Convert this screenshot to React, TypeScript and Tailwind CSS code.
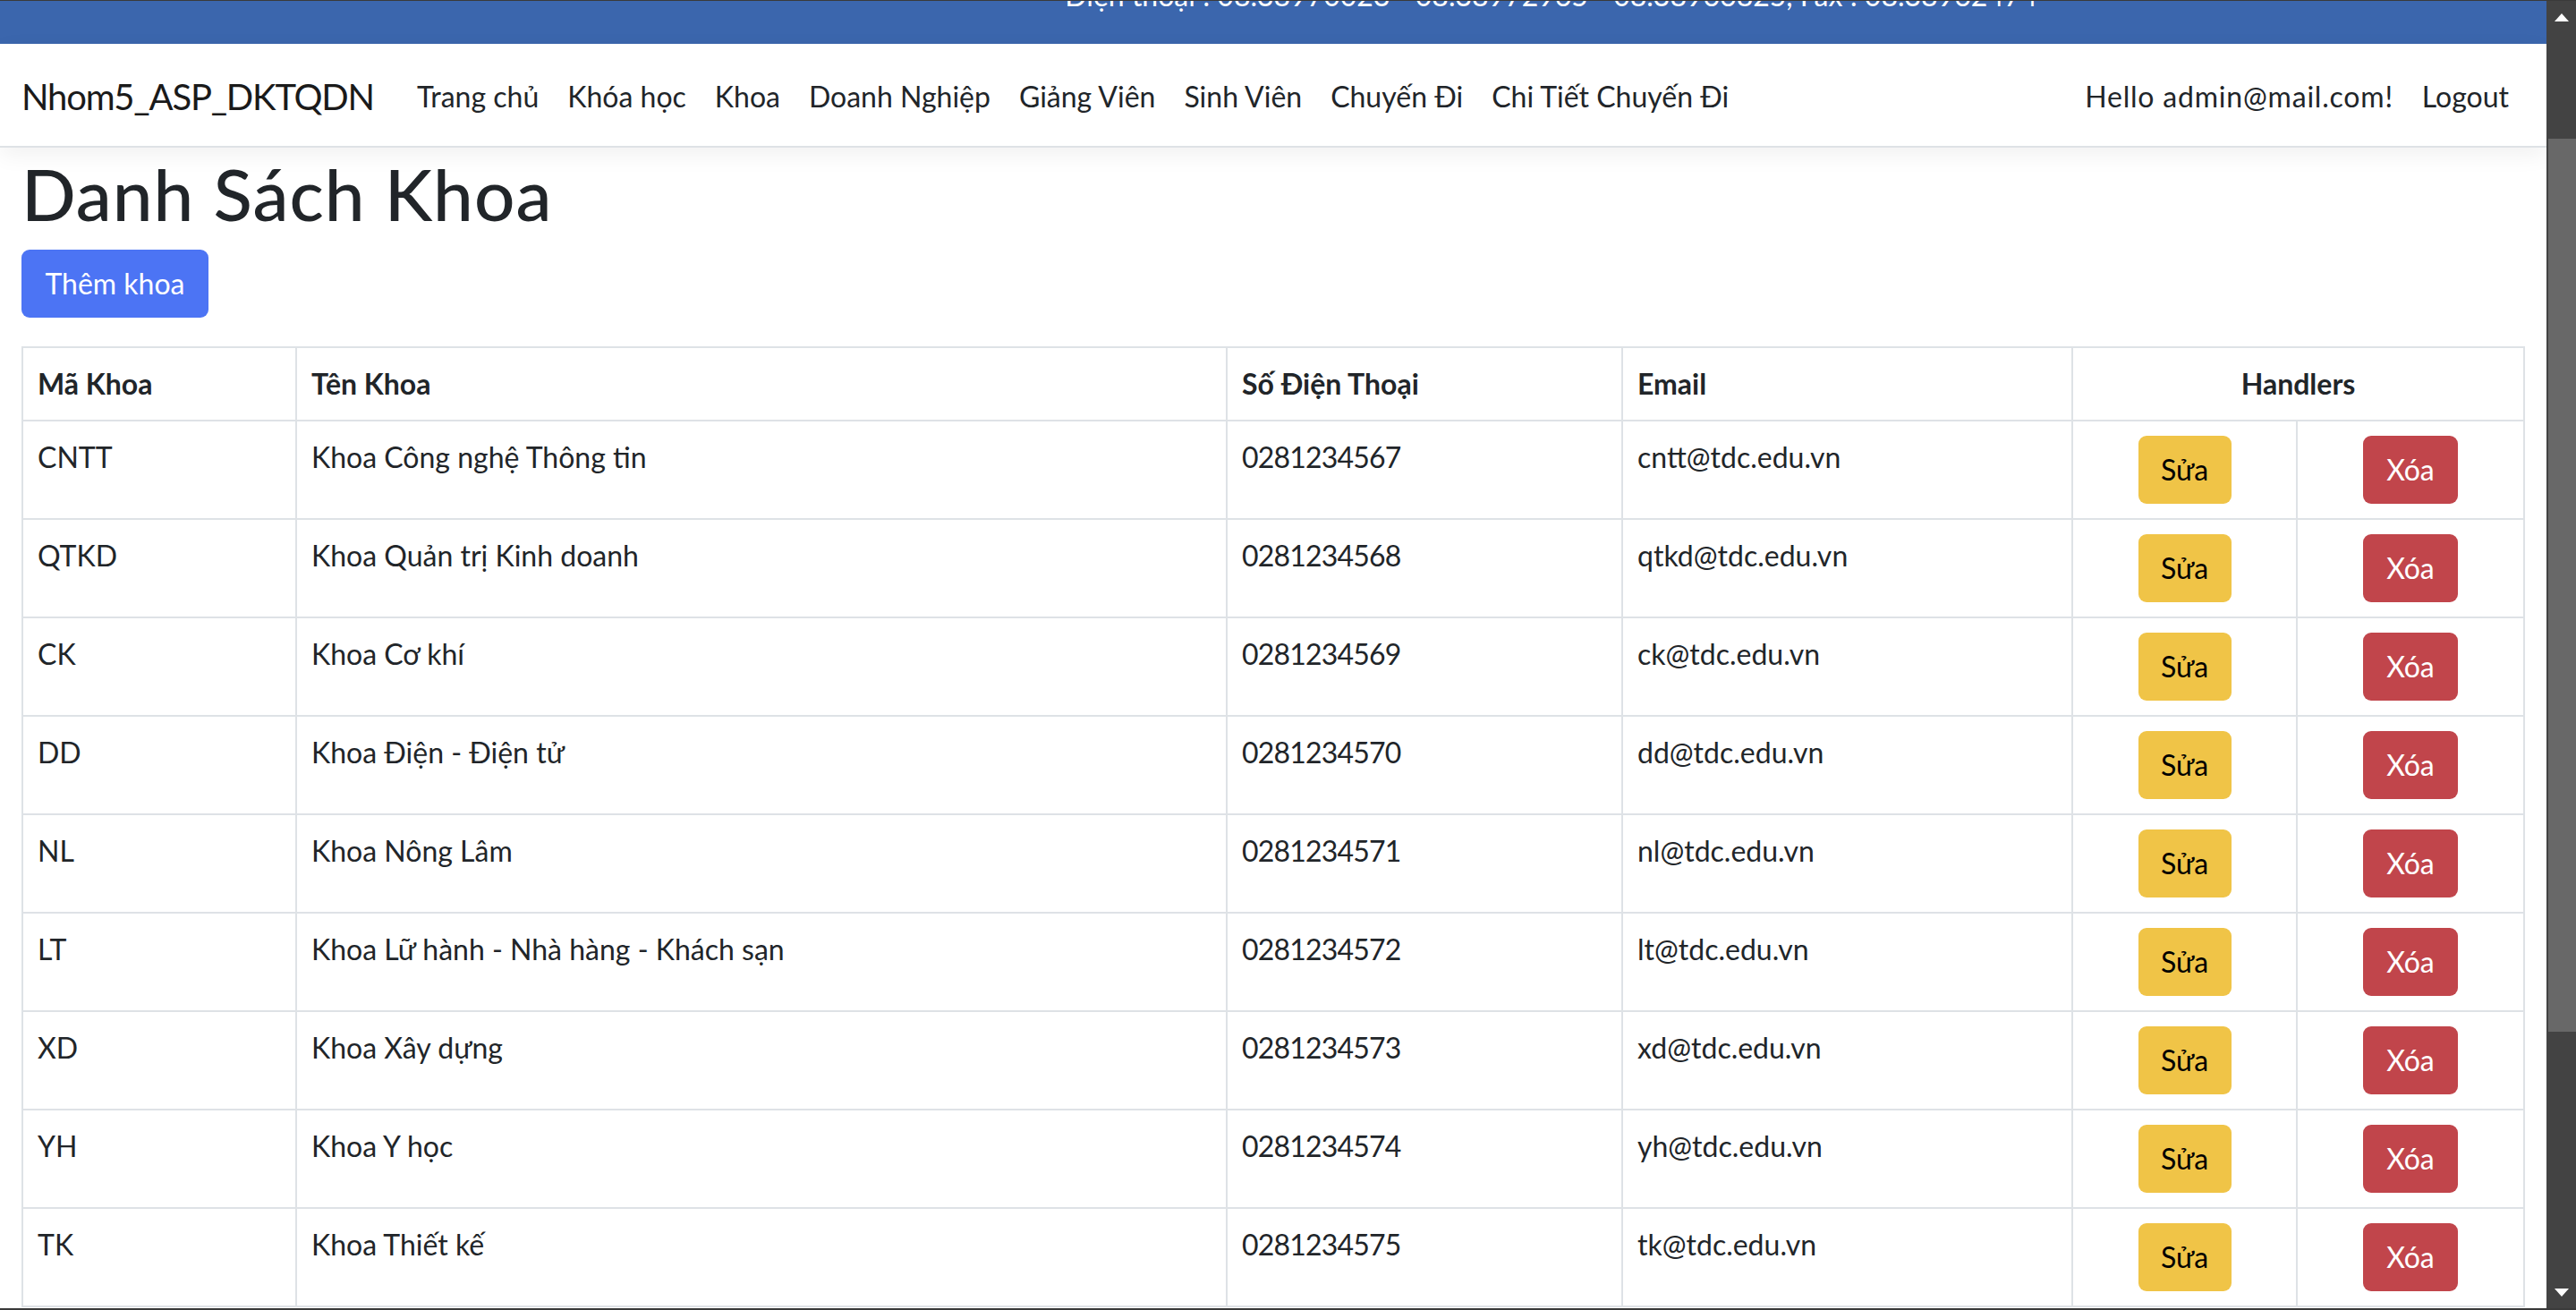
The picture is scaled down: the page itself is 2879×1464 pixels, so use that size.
import React from "react";

const links = [
  "Trang chủ",
  "Khóa học",
  "Khoa",
  "Doanh Nghiệp",
  "Giảng Viên",
  "Sinh Viên",
  "Chuyến Đi",
  "Chi Tiết Chuyến Đi",
];

const rows = [
  ["CNTT", "Khoa Công nghệ Thông tin", "0281234567", "cntt@tdc.edu.vn"],
  ["QTKD", "Khoa Quản trị Kinh doanh", "0281234568", "qtkd@tdc.edu.vn"],
  ["CK", "Khoa Cơ khí", "0281234569", "ck@tdc.edu.vn"],
  ["DD", "Khoa Điện - Điện tử", "0281234570", "dd@tdc.edu.vn"],
  ["NL", "Khoa Nông Lâm", "0281234571", "nl@tdc.edu.vn"],
  ["LT", "Khoa Lữ hành - Nhà hàng - Khách sạn", "0281234572", "lt@tdc.edu.vn"],
  ["XD", "Khoa Xây dựng", "0281234573", "xd@tdc.edu.vn"],
  ["YH", "Khoa Y học", "0281234574", "yh@tdc.edu.vn"],
  ["TK", "Khoa Thiết kế", "0281234575", "tk@tdc.edu.vn"],
];

function Arrow({ up }: { up: boolean }) {
  return (
    <svg width="16" height="9" viewBox="0 0 16 9">
      {up ? <polygon points="8,0 16,9 0,9" fill="#ffffff" /> : <polygon points="0,0 16,0 8,9" fill="#ffffff" />}
    </svg>
  );
}

export default function App() {
  return (
    <div className="h-[1464px] w-[2879px] overflow-hidden flex flex-col bg-white text-[#212529] font-['Lato','Noto_Sans',sans-serif]">
      <div className="h-px bg-[#3a3a3a] shrink-0" />
      <div className="flex-1 min-h-0 flex">
        <div className="flex-1 min-w-0 flex flex-col overflow-hidden">
          {/* scrolled header strip */}
          <div className="h-[48px] shrink-0 overflow-hidden bg-[#3b66ad] flex flex-col justify-end">
            <div className="flex items-end pb-[30px]">
              <div className="ml-[77px] mb-[46px] w-[36px] h-[40px] rounded-full bg-[#7fb3df] shrink-0" />
              <div className="ml-[1077px] text-white text-[32px] leading-[48px] whitespace-nowrap">
                Điện thoại : 08.38970023 - 08.38972965 - 08.38966825, Fax : 08.38962474
              </div>
            </div>
          </div>

          {/* navbar */}
          <nav className="relative z-10 h-[116px] shrink-0 bg-white border-b-2 border-[#dee2e6] shadow-[0_8px_24px_rgba(0,0,0,0.06)] flex items-center pt-[3px] pl-[24px] pr-[26px]">
            <span className="text-[40px] leading-[60px] tracking-[-1.2px] mr-[32px] text-[#1a1a1a] whitespace-nowrap">
              Nhom5_ASP_DKTQDN
            </span>
            <ul className="flex">
              {links.map((l) => (
                <li key={l} className="px-[16px] text-[32px] leading-[48px] whitespace-nowrap text-[#212529]">
                  {l}
                </li>
              ))}
            </ul>
            <ul className="ml-auto flex">
              <li className="px-[16px] text-[32px] leading-[48px] tracking-[0.8px] whitespace-nowrap">Hello admin@mail.com!</li>
              <li className="px-[16px] text-[32px] leading-[48px] whitespace-nowrap">Logout</li>
            </ul>
          </nav>

          {/* content */}
          <main className="pl-[24px] pr-[26px]">
            <h1 className="mt-[3px] mb-[15px] text-[80px] leading-[96px] tracking-[1px] font-medium">Danh Sách Khoa</h1>
            <button className="mb-[32px] w-[209px] h-[76px] rounded-[9px] bg-[#4c74f4] text-white text-[32px] leading-[48px] flex items-center justify-center">
              Thêm khoa
            </button>
            <table className="table-fixed w-[2796px] border-collapse text-[32px] leading-[48px]">
              <colgroup>
                <col className="w-[306px]" />
                <col className="w-[1040px]" />
                <col className="w-[442px]" />
                <col className="w-[503px]" />
                <col className="w-[251px]" />
                <col className="w-[254px]" />
              </colgroup>
              <thead>
                <tr>
                  <th className="border-2 border-[#dee2e6] p-[16px] text-left font-bold">Mã Khoa</th>
                  <th className="border-2 border-[#dee2e6] p-[16px] text-left font-bold">Tên Khoa</th>
                  <th className="border-2 border-[#dee2e6] p-[16px] text-left font-bold">Số Điện Thoại</th>
                  <th className="border-2 border-[#dee2e6] p-[16px] text-left font-bold">Email</th>
                  <th colSpan={2} className="border-2 border-[#dee2e6] p-[16px] text-center font-bold">
                    Handlers
                  </th>
                </tr>
              </thead>
              <tbody>
                {rows.map((r) => (
                  <tr key={r[0]}>
                    <td className="border-2 border-[#dee2e6] p-[16px] align-top">{r[0]}</td>
                    <td className="border-2 border-[#dee2e6] p-[16px] align-top">{r[1]}</td>
                    <td className="border-2 border-[#dee2e6] p-[16px] align-top tracking-[-0.8px]">{r[2]}</td>
                    <td className="border-2 border-[#dee2e6] p-[16px] align-top">{r[3]}</td>
                    <td className="border-2 border-[#dee2e6] p-[16px] align-top text-center">
                      <span className="inline-flex w-[104px] h-[76px] rounded-[9px] bg-[#f0c447] text-black items-center justify-center">
                        Sửa
                      </span>
                    </td>
                    <td className="border-2 border-[#dee2e6] p-[16px] align-top text-center">
                      <span className="inline-flex w-[106px] h-[76px] rounded-[9px] bg-[#c1454b] text-white items-center justify-center">
                        Xóa
                      </span>
                    </td>
                  </tr>
                ))}
              </tbody>
            </table>
          </main>
        </div>

        {/* scrollbar */}
        <div className="w-[33px] shrink-0 bg-[#434343] flex flex-col">
          <div className="h-[36px] flex items-center justify-center">
            <Arrow up={true} />
          </div>
          <div className="h-[118px]" />
          <div className="h-[998px] ml-[2px] bg-[#686868]" />
          <div className="flex-1" />
          <div className="h-[36px] flex items-center justify-center">
            <Arrow up={false} />
          </div>
        </div>
      </div>
      <div className="h-[2px] bg-[#3a3a3a] shrink-0" />
    </div>
  );
}
